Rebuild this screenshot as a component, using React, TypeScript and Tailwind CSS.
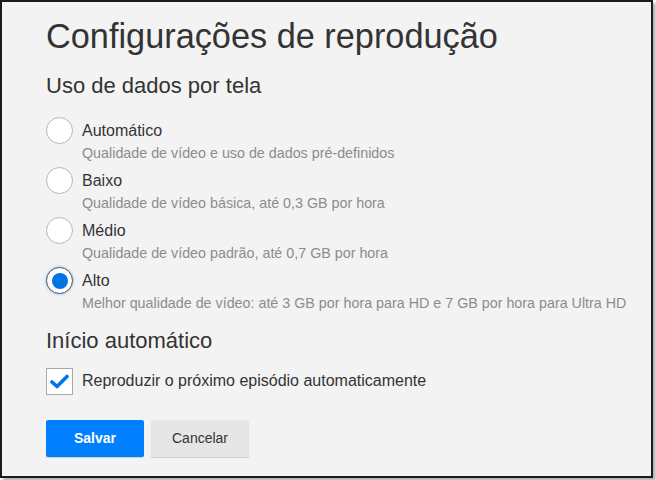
import React, { useState } from 'react';

const options = [
  { id: 'auto', label: 'Automático', desc: 'Qualidade de vídeo e uso de dados pré-definidos' },
  { id: 'low', label: 'Baixo', desc: 'Qualidade de vídeo básica, até 0,3 GB por hora' },
  { id: 'medium', label: 'Médio', desc: 'Qualidade de vídeo padrão, até 0,7 GB por hora' },
  { id: 'high', label: 'Alto', desc: 'Melhor qualidade de vídeo: até 3 GB por hora para HD e 7 GB por hora para Ultra HD' },
];

export default function App() {
  const [selected, setSelected] = useState('high');
  const [autoplay, setAutoplay] = useState(true);

  return (
    <div className="w-[656px] h-[480px] bg-white font-['Liberation_Sans',Arial,sans-serif] overflow-hidden">
      <div className="w-[653px] h-[478px] bg-[#f3f3f3] border-2 border-[#1c1c1c] shadow-[3px_3px_3px_rgba(0,0,0,0.3)] pl-[44px] pt-[14px]">
        <h1 className="text-[34.3px] leading-[40px] text-[#333]">Configurações de reprodução</h1>

        <h2 className="mt-[16px] text-[22px] leading-[28px] text-[#333]">Uso de dados por tela</h2>

        <div className="mt-[21px] flex flex-col">
          {options.map(o => (
            <div key={o.id} className="h-[50px] flex items-start cursor-pointer" onClick={() => setSelected(o.id)}>
              {selected === o.id ? (
                <div className="w-[27px] h-[27px] -mt-[4px] shrink-0 rounded-full bg-white border border-[#555] shadow-[0_0_3px_rgba(0,113,235,0.45)] flex items-center justify-center">
                  <div className="w-[16px] h-[16px] rounded-full bg-[#0073e6]" />
                </div>
              ) : (
                <div className="w-[27px] h-[27px] -mt-[4px] shrink-0 rounded-full bg-white border border-[#b5b5b5]" />
              )}
              <div className="ml-[9px]">
                <p className="text-[16px] leading-[20px] text-[#333]">{o.label}</p>
                <p className="mt-[3px] text-[14.3px] leading-[18px] text-[#8c8c8c]">{o.desc}</p>
              </div>
            </div>
          ))}
        </div>

        <h2 className="mt-[6px] text-[22px] leading-[28px] text-[#333]">Início automático</h2>

        <div className="mt-[16px] flex items-start cursor-pointer" onClick={() => setAutoplay(!autoplay)}>
          <div className="w-[27px] h-[27px] -mt-[3px] shrink-0 bg-white border border-[#aaa] flex items-center justify-center">
            {autoplay && (
              <svg width="19" height="15" viewBox="0 0 19 15" fill="none">
                <path d="M2 8 L7 12.5 L17 2.5" stroke="#0073e6" strokeWidth="3.6" strokeLinecap="round" strokeLinejoin="round" />
              </svg>
            )}
          </div>
          <p className="ml-[9px] text-[16px] leading-[20px] text-[#333]">Reproduzir o próximo episódio automaticamente</p>
        </div>

        <div className="mt-[25px] flex gap-[7px]">
          <button className="w-[98px] h-[37px] rounded-[2px] bg-[#0080ff] text-white text-[14px] font-bold shadow-[0_1px_0_rgba(0,0,0,0.15)]">Salvar</button>
          <button className="w-[98px] h-[37px] rounded-[2px] bg-[#e6e6e6] text-[#333] text-[14px] shadow-[0_1px_0_rgba(0,0,0,0.15)]">Cancelar</button>
        </div>
      </div>
    </div>
  );
}
